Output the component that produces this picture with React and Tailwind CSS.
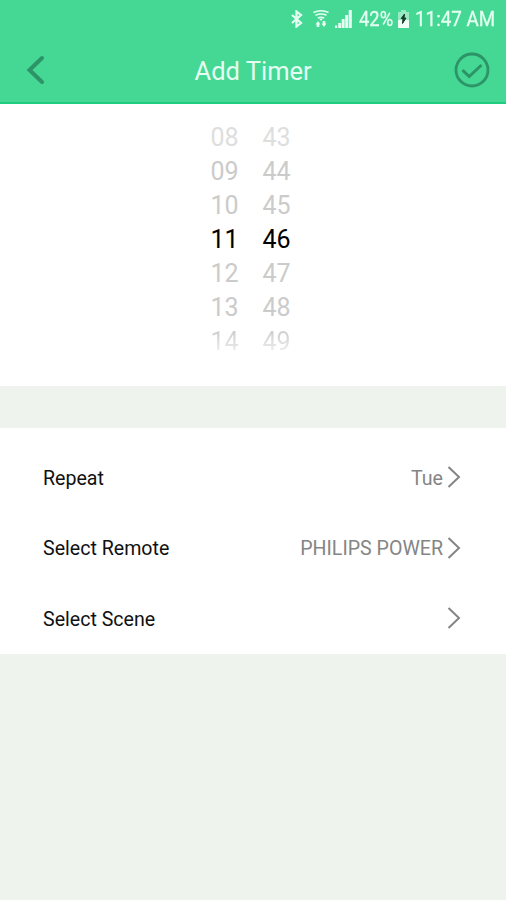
const PICKER_ROWS = [
  { hour: "08", minute: "43", tone: "text-[#dedede]" },
  { hour: "09", minute: "44", tone: "text-[#cbcbcb]" },
  { hour: "10", minute: "45", tone: "text-[#cbcbcb]" },
  { hour: "11", minute: "46", tone: "text-black" },
  { hour: "12", minute: "47", tone: "text-[#cbcbcb]" },
  { hour: "13", minute: "48", tone: "text-[#cbcbcb]" },
  {
    hour: "14",
    minute: "49",
    tone: "bg-linear-to-b from-[#cfcfcf] from-20% to-[#f0f0f0] to-85% bg-clip-text text-transparent",
  },
];

const SETTINGS = [
  { label: "Repeat", value: "Tue" },
  { label: "Select Remote", value: "PHILIPS POWER" },
  { label: "Select Scene", value: "" },
];

function StatusBar() {
  return (
    <div className="flex h-[37px] items-center pl-[290px] text-[#e4fff1]">
      <svg className="h-[18px] w-[13px] shrink-0" viewBox="0 0 13 18" fill="none" stroke="currentColor" strokeWidth="2.2">
        <path d="M2 5l9 8-4.5 3.500V1.500L11 5l-9 8" />
      </svg>
      <svg className="ml-[10px] h-[18px] w-[16px] shrink-0" viewBox="0 0 16 18" fill="none" stroke="currentColor" strokeWidth="1.5">
        <path d="M0.5 2.5Q8-1 15.5 2.5M2.5 5.3Q8 2.8 13.5 5.3M4.8 8Q8 6.5 11.2 8" />
        <path d="M6 8.500h4l-2 2.500z" fill="currentColor" stroke="none" />
        <path d="M2.500 14.500L5 11l2.500 3.500H6.300V17H3.700v-2.500zM8.500 13.500h1.200V11h2.600v2.500h1.200L11 17z" fill="currentColor" stroke="none" />
      </svg>
      <svg className="ml-[6px] h-[18px] w-[17px] shrink-0" viewBox="0 0 17 18" fill="currentColor">
        <path d="M0 15.500h2.200V18H0zM3.200 13h2.900v5H3.200zM6.700 9h2.900v9H6.700zM10.200 5h2.900v13h-2.900zM13.700 0h3.100v18h-3.100z" />
      </svg>
      <span className="ml-[7px] w-[34px] whitespace-nowrap text-[20px] leading-6">
        <span className="inline-block origin-left scale-x-[0.92] [-webkit-text-stroke:0.3px_currentColor]">42%</span>
      </span>
      <svg className="ml-[5px] h-[18px] w-[11px] shrink-0" viewBox="0 0 11 18">
        <path d="M3 0h5v2h3v8H0V2h3z" fill="#9be9c4" />
        <path d="M0 10h11v8H0z" fill="#effff6" />
        <path d="M6.500 4L3.200 8.500H5L4.500 13.500l3.500-5.500H6z" fill="#143c28" stroke="#143c28" strokeWidth="1" />
      </svg>
      <span className="ml-[6px] whitespace-nowrap text-[20px] leading-6">
        <span className="inline-block origin-left scale-x-[0.94] [-webkit-text-stroke:0.3px_currentColor]">11:47 AM</span>
      </span>
    </div>
  );
}

function Header() {
  return (
    <header className="h-[104px] border-b-2 border-[#20cd80] bg-[#45d794]">
      <StatusBar />
      <div className="flex h-[65px] items-center pl-[26px] pr-4">
        <svg className="h-[30px] w-[36px]" viewBox="0 0 36 30" fill="none" stroke="#2c9466" strokeWidth="4" strokeLinecap="round" strokeLinejoin="miter">
          <path d="M16 3L3.500 15L16 27" />
        </svg>
        <h1 className="ml-[132.500px] mt-[3px] whitespace-nowrap text-[25.5px] leading-8 text-[#e4fff1]">Add Timer</h1>
        <svg className="ml-auto h-[36px] w-[36px]" viewBox="0 0 36 36" fill="none" stroke="#2c9466">
          <circle cx="18" cy="18" r="16" strokeWidth="2.800" />
          <path d="M8.500 18.200L15.200 24.500L27.500 13" strokeWidth="3" />
        </svg>
      </div>
    </header>
  );
}

function TimePicker() {
  return (
    <section className="h-[282px] bg-white pt-[17px]">
      {PICKER_ROWS.map((row) => (
        <div key={row.hour} className="flex h-[34px] justify-center gap-6 pr-[5px] text-[25px] leading-[34px]">
          <span className={row.tone}>{row.hour}</span>
          <span className={row.tone}>{row.minute}</span>
        </div>
      ))}
    </section>
  );
}

function SettingRow({ label, value }) {
  return (
    <div className="flex h-[70.5px] items-center pl-[43px] pr-[45px] text-[19.6px]">
      <span className="mt-0.5 grow text-[#111]">{label}</span>
      <span className="mt-0.5 text-[#858585]">{value}</span>
      <svg className="ml-1 h-[22px] w-[14px]" viewBox="0 0 14 22" fill="none" stroke="#858585" strokeWidth="2">
        <path d="M1.500 1L12 11L1.500 21" />
      </svg>
    </div>
  );
}

export default function App() {
  return (
    <div className="h-[900px] w-[506px] overflow-hidden bg-[#eef3ed] font-['Roboto',sans-serif]">
      <Header />
      <TimePicker />
      <section className="mt-[42px] h-[226px] bg-white pt-[14px]">
        {SETTINGS.map((item) => (
          <SettingRow key={item.label} label={item.label} value={item.value} />
        ))}
      </section>
    </div>
  );
}
